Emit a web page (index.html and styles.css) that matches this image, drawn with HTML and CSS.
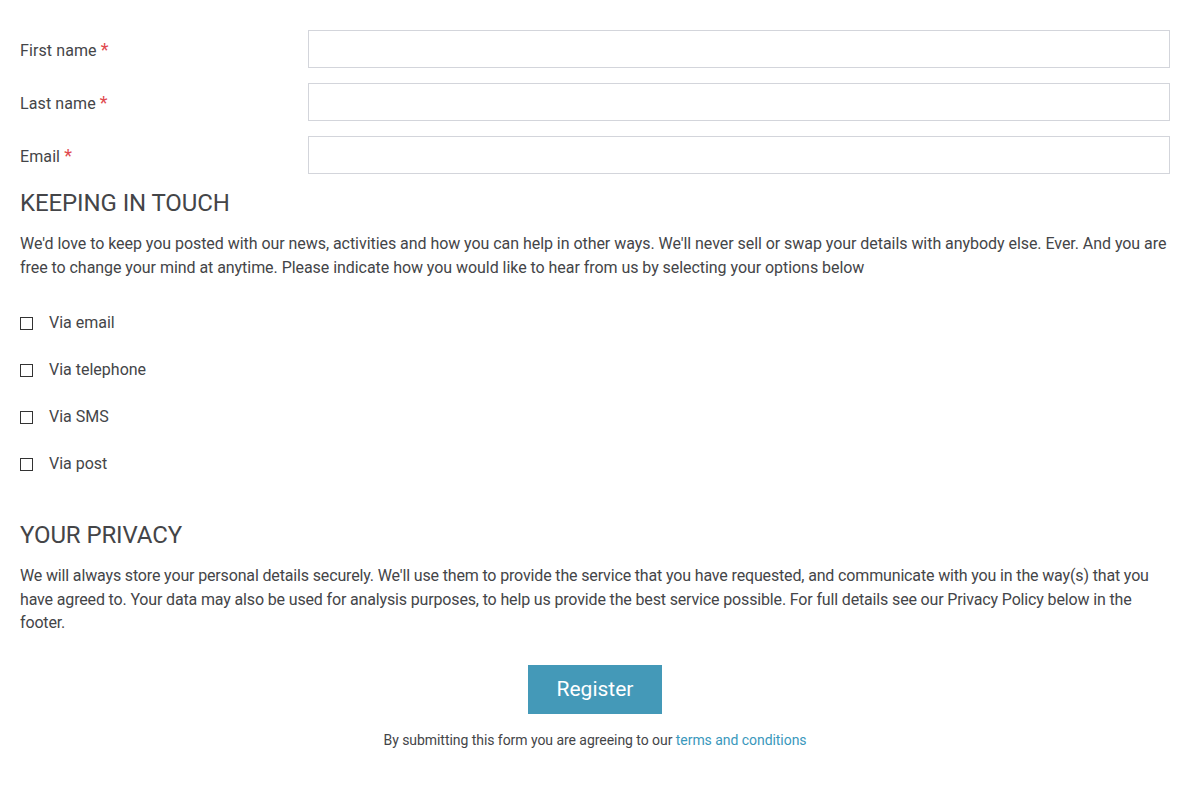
FILE: index.html
```html
<!DOCTYPE html>
<html lang="en">
<head>
<meta charset="utf-8">
<title>Register</title>
<link rel="stylesheet" href="styles.css">
</head>
<body>
<form class="form">
  <div class="fields">
    <div class="row">
      <label class="label" for="fn">First name <span class="req">*</span></label>
      <input class="input" id="fn" type="text">
    </div>
    <div class="row">
      <label class="label" for="ln">Last name <span class="req">*</span></label>
      <input class="input" id="ln" type="text">
    </div>
    <div class="row">
      <label class="label" for="em">Email <span class="req">*</span></label>
      <input class="input" id="em" type="email">
    </div>
  </div>

  <h2 class="heading">KEEPING IN TOUCH</h2>
  <p class="text text-touch">We'd love to keep you posted with our news, activities and how you can help in other ways. We'll never sell or swap your details with anybody else. Ever. And you are free to change your mind at anytime. Please indicate how you would like to hear from us by selecting your options below</p>

  <div class="options">
    <label class="option"><input class="check" type="checkbox"><span>Via email</span></label>
    <label class="option"><input class="check" type="checkbox"><span>Via telephone</span></label>
    <label class="option"><input class="check" type="checkbox"><span>Via SMS</span></label>
    <label class="option"><input class="check" type="checkbox"><span>Via post</span></label>
  </div>

  <h2 class="heading heading-privacy">YOUR PRIVACY</h2>
  <p class="text text-privacy">We will always store your personal details securely. We'll use them to provide the service that you have requested, and communicate with you in the way(s) that you have agreed to. Your data may also be used for analysis purposes, to help us provide the best service possible. For full details see our Privacy Policy below in the footer.</p>

  <div class="actions">
    <button class="button" type="button">Register</button>
    <p class="terms">By submitting this form you are agreeing to our <a class="link" href="#">terms and conditions</a></p>
  </div>
</form>
</body>
</html>
```

FILE: styles.css
```css
* { box-sizing: border-box; }

html, body {
  margin: 0;
  background: #ffffff;
}

body {
  padding: 30px 20px 0 20px;
  font-family: Roboto, "Liberation Sans", sans-serif;
  font-size: 16px;
  color: #444548;
}

.form { display: block; }

.fields {
  display: flex;
  flex-direction: column;
  gap: 15px;
}

.row {
  display: grid;
  grid-template-columns: 288px 1fr;
  align-items: center;
}

.label {
  font-size: 16px;
  line-height: 24px;
  padding-top: 2px;
  letter-spacing: 0.1px;
}

.req {
  color: #e04a4f;
  font-size: 18px;
  margin-left: 0;
}

.input {
  height: 38px;
  width: 100%;
  border: 1px solid #d3d5db;
  border-radius: 0;
  background: #fff;
  font: inherit;
  padding: 0 10px;
  outline: none;
}

.heading {
  margin: 14px 0 0 0;
  font-size: 24px;
  line-height: 30px;
  font-weight: 400;
  letter-spacing: -0.1px;
  color: #444548;
}

.heading-privacy { margin-top: 44px; }

.text {
  margin: 14px 0 0 0;
  line-height: 24px;
}

.text-touch { letter-spacing: -0.05px; }

.text-privacy {
  line-height: 23.5px;
  letter-spacing: -0.15px;
}

.options {
  margin-top: 31px;
  display: flex;
  flex-direction: column;
  gap: 23px;
}

.option {
  display: flex;
  align-items: center;
  gap: 16px;
  line-height: 24px;
}

.check {
  appearance: none;
  -webkit-appearance: none;
  margin: 0;
  width: 13px;
  height: 13px;
  border: 1px solid #333;
  background: #fff;
  flex: none;
}

.actions {
  margin-top: 30px;
  display: flex;
  flex-direction: column;
  align-items: center;
}

.button {
  width: 134px;
  height: 49px;
  border: 0;
  border-radius: 0;
  background: #4499b8;
  color: #fff;
  font-family: inherit;
  font-size: 21px;
  letter-spacing: 0;
  cursor: pointer;
}

.terms {
  margin: 16px 0 0 0;
  font-size: 14px;
  line-height: 20px;
  letter-spacing: -0.05px;
}

.link {
  color: #3a98bc;
  text-decoration: none;
}
```
